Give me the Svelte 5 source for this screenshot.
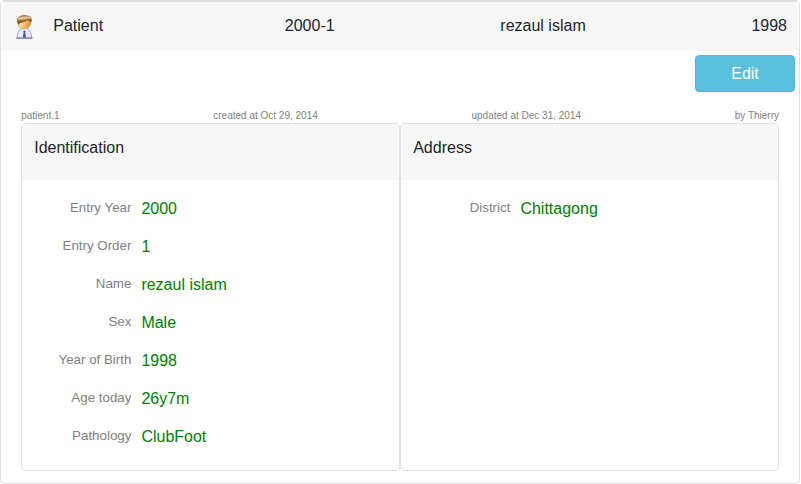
<script>
  const patient = { id: '2000-1', name: 'rezaul islam', birth: '1998' };
  const meta = ['patient.1', 'created at Oct 29, 2014', 'updated at Dec 31, 2014', 'by Thierry'];
  const sections = [
    {
      title: 'Identification',
      fields: [
        ['Entry Year', '2000'],
        ['Entry Order', '1'],
        ['Name', patient.name],
        ['Sex', 'Male'],
        ['Year of Birth', patient.birth],
        ['Age today', '26y7m'],
        ['Pathology', 'ClubFoot'],
      ],
    },
    { title: 'Address', fields: [['District', 'Chittagong']] },
  ];
</script>

<div class="page">
  <div class="previous"></div>
  <main class="record">
    <header class="summary">
      <div class="kind">
        <svg width="20" height="25" viewBox="0 0 20 25" aria-hidden="true">
          <defs>
            <linearGradient id="hair" x1=".4" y1="0" x2=".6" y2="1">
              <stop offset="0" stop-color="#9a6c34" />
              <stop offset=".3" stop-color="#eed5ae" />
              <stop offset=".58" stop-color="#a06c2c" />
              <stop offset="1" stop-color="#5f3509" />
            </linearGradient>
            <linearGradient id="skin" x1="0" y1="0" x2="1" y2=".3">
              <stop offset="0" stop-color="#ffbd70" />
              <stop offset=".4" stop-color="#ffdda5" />
              <stop offset=".75" stop-color="#fbb25e" />
              <stop offset="1" stop-color="#e38f40" />
            </linearGradient>
          </defs>
          <path d="M2.8 23 4 17.8Q4.8 14.6 7.5 14h5.7q2.6 .5 3.4 3.8l1.4 5.2Z" fill="#e7ebfc" stroke="#929ad6" stroke-width=".9" />
          <path d="M2.4 23.1h16" stroke="#6067b3" stroke-width="1" />
          <path d="m7.5 14 2.9 3.2 2.8-3.2" fill="#fff" />
          <path d="m9.3 16 1.1-.8 1.1.8-.3 1.5.9 4.3-1.7 1.2-1.7-1.2.9-4.3Z" fill="#4d5aac" />
          <ellipse cx="10.3" cy="7.7" rx="6.3" ry="6.1" fill="url(#skin)" stroke="#d88d3c" stroke-width=".8" />
          <path d="M4.1 8.7C1.7 4.2 4.5.5 10.2.5c5.6 0 8.3 2.8 6.9 6.4l-1-.6-2.5-1.4c-2.8 2-6.1 2-9.5 3.8Z" fill="url(#hair)" stroke="#7b4f1d" stroke-width=".6" />
        </svg>
        <span>Patient</span>
      </div>
      <span>{patient.id}</span>
      <span>{patient.name}</span>
      <span>{patient.birth}</span>
    </header>
    <div class="actions"><button>Edit</button></div>
    <div class="details">
      <div class="meta">
        {#each meta as item}<span>{item}</span>{/each}
      </div>
      <div class="sections">
        {#each sections as section}
          <section>
            <h2>{section.title}</h2>
            <dl>
              {#each section.fields as [label, value]}
                <div class="field"><dt>{label}</dt><dd>{value}</dd></div>
              {/each}
            </dl>
          </section>
        {/each}
      </div>
    </div>
  </main>
</div>

<style>
  :global(body) {
    background: #fff;
  }
  .page {
    width: 800px;
    height: 484px;
    display: flex;
    flex-direction: column;
    box-sizing: border-box;
    color: #212529;
    font: 16px/24px "Liberation Sans", Arial, sans-serif;
  }
  .page * {
    box-sizing: border-box;
  }
  .previous {
    height: 1px;
    margin: 0 3px;
    background: #dfdfdf;
  }
  .record {
    flex: 1;
    border: 1px solid #dfdfdf;
    border-radius: 4px;
    overflow: hidden;
  }
  .summary {
    height: 49px;
    padding: 0 12px 2px;
    display: flex;
    align-items: center;
    justify-content: space-between;
    background: #f7f7f7;
  }
  .kind {
    display: flex;
    align-items: center;
    gap: 19.3px;
    padding: 0 16px 0 1px;
  }
  .kind svg {
    margin-top: 3px;
  }
  .actions {
    display: flex;
    justify-content: flex-end;
    padding: 4px 4px 0;
  }
  button {
    width: 100px;
    height: 37px;
    padding: 0;
    border: 1px solid #46b8da;
    border-radius: 4px;
    background: #5bc0de;
    color: #fff;
    font: inherit;
  }
  .details {
    padding: 16px 20px 0;
  }
  .meta {
    height: 15px;
    display: flex;
    justify-content: space-between;
    padding-left: 0.2px;
    color: #808080;
    font-size: 10px;
    line-height: 15px;
  }
  .sections {
    height: 348px;
    display: grid;
    grid-template-columns: 1fr 1fr;
  }
  section {
    border: 1px solid #dfdfdf;
    border-radius: 4px;
    overflow: hidden;
  }
  h2 {
    height: 56px;
    margin: 0;
    padding: 12px 12.2px;
    background: #f7f7f7;
    font-size: 16px;
    font-weight: 400;
    line-height: 24px;
  }
  dl {
    margin: 0;
    padding-top: 10px;
  }
  .field {
    height: 38px;
    display: grid;
    grid-template-columns: 109.4px 1fr;
    gap: 10px;
    align-items: start;
    padding-top: 7px;
  }
  dt {
    color: #808080;
    font-size: 13.333px;
    line-height: 22px;
    text-align: right;
  }
  dd {
    margin: 0;
    color: #008000;
  }
</style>
